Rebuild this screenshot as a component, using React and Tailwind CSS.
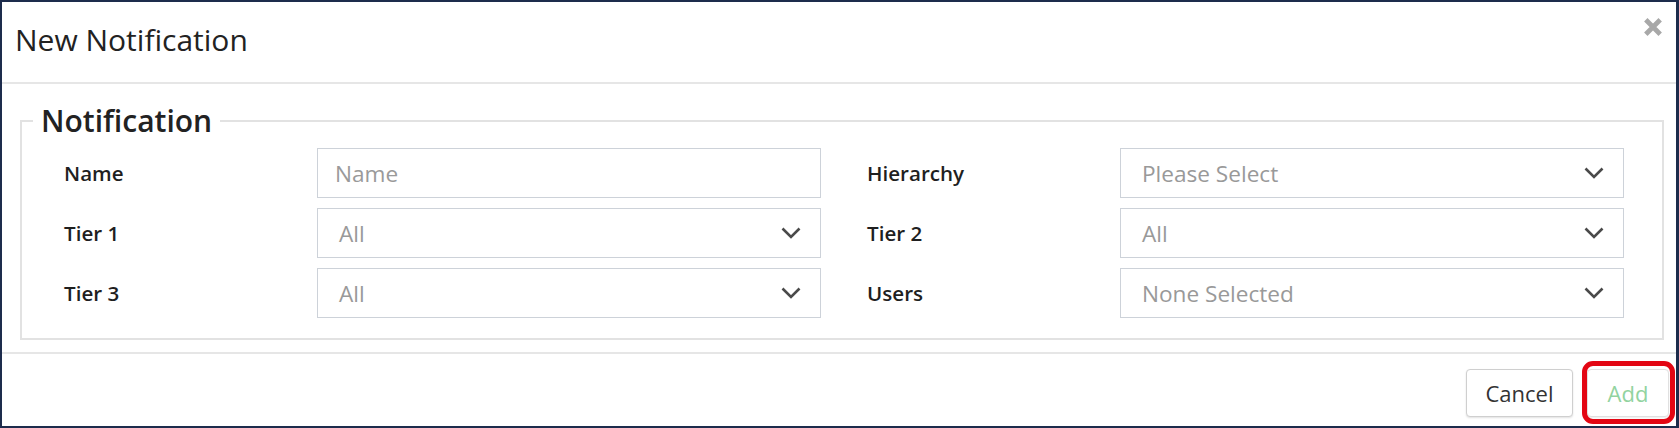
import React from "react";

const rows = [
  [
    { label: "Name", type: "input", placeholder: "Name" },
    { label: "Hierarchy", type: "select", value: "Please Select" },
  ],
  [
    { label: "Tier 1", type: "select", value: "All" },
    { label: "Tier 2", type: "select", value: "All" },
  ],
  [
    { label: "Tier 3", type: "select", value: "All" },
    { label: "Users", type: "select", value: "None Selected" },
  ],
];

const Chevron = () => (
  <svg width="20" height="12" viewBox="0 0 20 12" fill="none">
    <path d="M1.5 1.5l8.5 8.5 8.5-8.5" stroke="#4a4a4a" strokeWidth="2.6" />
  </svg>
);

const Field = ({ field }) => (
  <div className="flex items-center">
    <label className="w-[253px] text-[20.6px] leading-[50px] font-semibold text-[#1f1f1f]">
      {field.label}
    </label>
    {field.type === "input" ? (
      <input
        type="text"
        placeholder={field.placeholder}
        className="w-[504px] h-[50px] border border-[#cdd2d9] pl-[17px] text-[22.6px] text-[#333] placeholder:text-[#9a9a9a] outline-none"
      />
    ) : (
      <div className="w-[504px] h-[50px] border border-[#cdd2d9] pl-[21px] pr-[19px] flex items-center justify-between cursor-pointer">
        <span className="pt-[2px] text-[22.6px] text-[#999]">{field.value}</span>
        <Chevron />
      </div>
    )}
  </div>
);

export default function App() {
  return (
    <div className="w-[1679px] h-[428px] bg-white border-l-2 border-t-2 border-r-[3px] border-b-2 border-[#1d2c4c] flex flex-col font-['Open_Sans',sans-serif] overflow-hidden">
      {/* header */}
      <div className="flex justify-between items-start border-b-2 border-[#e6e6e6] pt-[18px] pb-[22px] pl-[13px] pr-[14px]">
        <h4 className="text-[30px] leading-[40px] text-[#222]">New Notification</h4>
        <button className="mt-[-2px]">
          <svg width="18" height="18" viewBox="0 0 18 18">
            <path d="M1.8 1.8l14.4 14.4M16.2 1.8l-14.4 14.4" stroke="#a8a8a8" strokeWidth="4.8" />
          </svg>
        </button>
      </div>

      {/* body */}
      <div className="pt-[17px] pb-[12px] pl-[18px] pr-[12px]">
        <fieldset className="border-2 border-[#e2e2e2] pl-[11px] pt-[7px] pb-[20px]">
          <legend className="px-[8px] text-[30px] leading-[40px] font-semibold text-[#222]">
            Notification
          </legend>
          <div className="pl-[31px] flex flex-col gap-[10px]">
            {rows.map((row, i) => (
              <div key={i} className="flex gap-[46px]">
                {row.map((f) => (
                  <Field key={f.label} field={f} />
                ))}
              </div>
            ))}
          </div>
        </fieldset>
      </div>

      {/* footer */}
      <div className="border-t-2 border-[#e6e6e6] pt-[15px] pb-[9px] pr-[7px] flex justify-end gap-[14px]">
        <button className="w-[107px] h-[48px] bg-white border border-[#cfcfcf] rounded-[4px] shadow-[0_1px_2px_rgba(0,0,0,0.12)] text-[22px] text-[#333]">
          Cancel
        </button>
        <div className="relative">
          <button
            disabled
            className="w-[82px] h-[48px] bg-white border border-[#e0e0e0] rounded-[4px] shadow-[0_1px_2px_rgba(0,0,0,0.08)] text-[22px] text-[#92d39f]"
          >
            Add
          </button>
          <div className="absolute -left-[5px] -right-[6px] -top-[8px] -bottom-[7px] border-[5px] border-[#e30613] rounded-[11px] pointer-events-none" />
        </div>
      </div>
    </div>
  );
}
